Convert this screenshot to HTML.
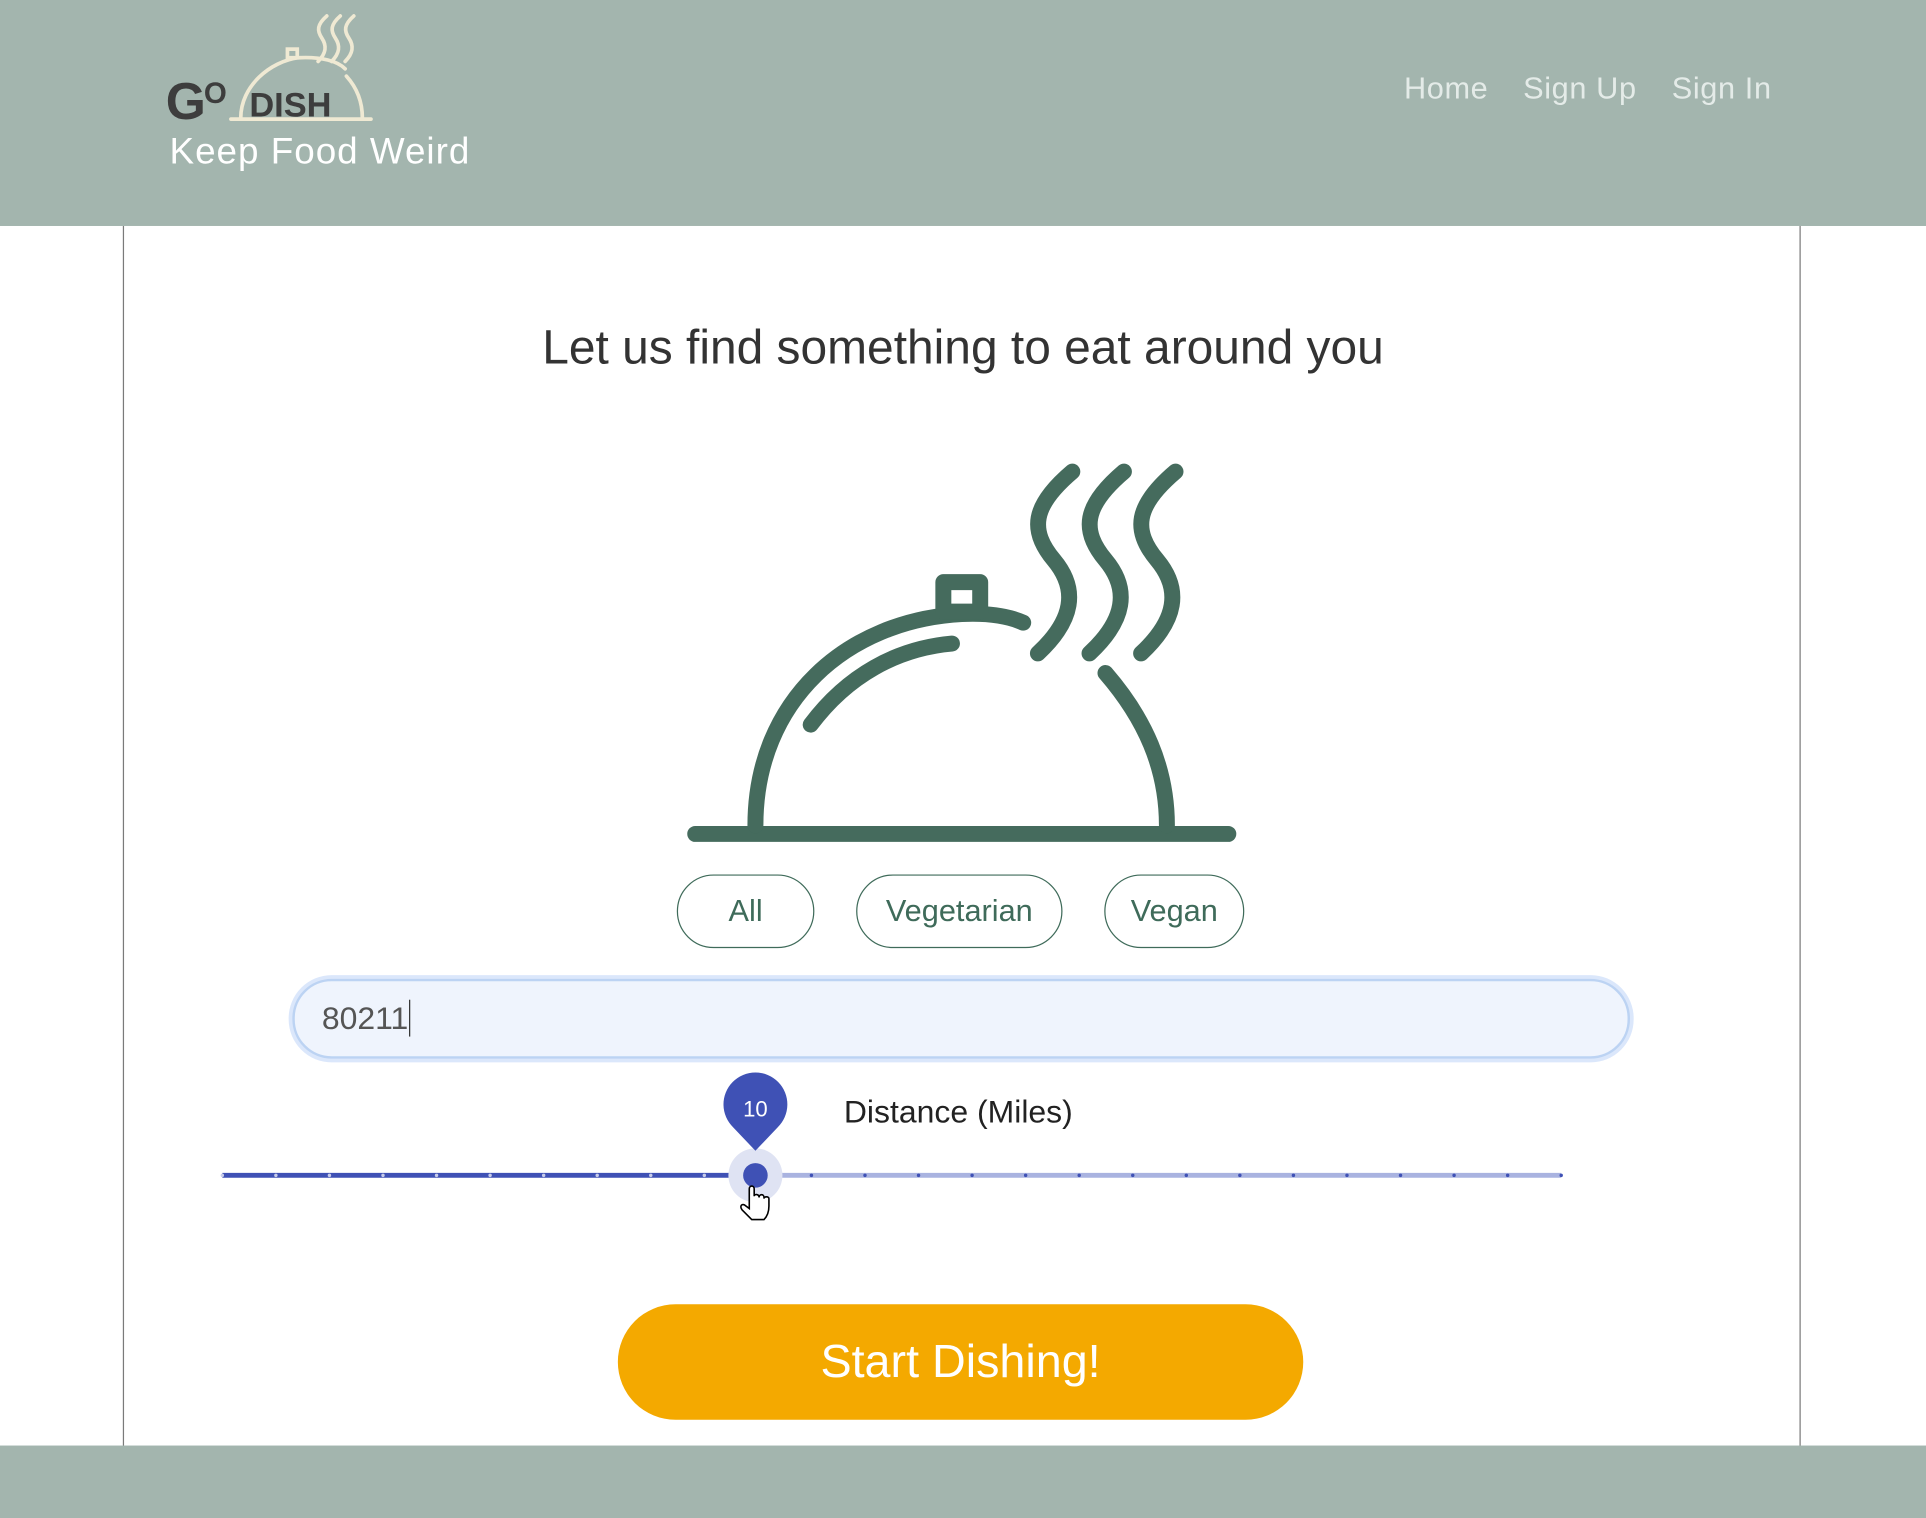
<!DOCTYPE html>
<html><head><meta charset="utf-8">
<style>
html,body{margin:0;padding:0;width:1926px;height:1518px;overflow:hidden;background:#fff;font-family:"Liberation Sans",sans-serif;}
#w{position:absolute;left:0;top:0;width:1568px;height:1236px;transform:scale(1.22832,1.22816);transform-origin:0 0;}
.hdr{position:absolute;left:0;top:0;width:1568px;height:184px;background:#a3b5ae;}
.ftr{position:absolute;left:0;top:1177px;width:1568px;height:59px;background:#a3b5ae;}
.card{position:absolute;left:100px;top:184px;width:1364px;height:1000px;border:1px solid #7a7a7a;border-top:none;background:#fff;}
.nav{position:absolute;top:58px;font-size:25px;color:#e4ebe8;letter-spacing:0.5px;}
.tag{position:absolute;left:138px;top:107px;font-size:30px;color:#fff;letter-spacing:0.8px;}
.title{position:absolute;left:0;width:1568px;top:262px;text-align:center;font-size:39px;color:#333;}
.pill{position:absolute;top:712px;height:58px;border:1.5px solid #3f6b5a;border-radius:30px;color:#3f6b5a;font-size:25px;text-align:center;line-height:58px;box-sizing:content-box;}
.inp{position:absolute;left:238px;top:797px;width:1085px;height:61px;background:#eff4fd;border:2px solid #bcd3f3;border-radius:32px;box-shadow:0 0 0 3px #dbe7fb;}
.inp span{position:absolute;left:22px;top:15px;font-size:26px;color:#555;}
.dist{position:absolute;left:687px;top:890px;font-size:26px;color:#222;}
.btn{position:absolute;left:503px;top:1062px;width:558px;height:94px;border-radius:47px;background:#f4a900;color:#fff;font-size:38px;text-align:center;line-height:94px;}
</style></head><body>
<div id="w">
<div class="hdr"></div>
<div class="card"></div>
<div class="ftr"></div>

<svg style="position:absolute;left:0;top:0" width="400" height="184" viewBox="0 0 400 184">
 <g fill="none" stroke="#efe9d3" stroke-width="3" stroke-linecap="round">
  <path d="M196,96 C196,70 220,50 243,47 C262,46 275,50 281,56"/>
  <path d="M282,62 C291,72 295,84 295,96"/>
  <rect x="234" y="40" width="8" height="7"/>
  <path d="M188,97 L302,97"/>
  <path d="M266,13 C258,20 258,25 262,31 C266,37 266,43 259,50"/>
  <path d="M277,13 C269,20 269,25 273,31 C277,37 277,43 270,50"/>
  <path d="M288,13 C280,20 280,25 284,31 C288,37 288,43 281,50"/>
 </g>
 <text x="135" y="97" font-family="Liberation Sans,sans-serif" font-size="42" fill="#3d3d3d" font-weight="bold">G</text>
 <text x="166" y="84" font-family="Liberation Sans,sans-serif" font-size="24" fill="#3d3d3d" font-weight="bold">O</text>
 <text x="203" y="95" font-family="Liberation Sans,sans-serif" font-size="28" fill="#3d3d3d" font-weight="bold">DISH</text>
</svg>
<div class="tag">Keep Food Weird</div>
<div class="nav" style="left:1143px">Home</div>
<div class="nav" style="left:1240px">Sign Up</div>
<div class="nav" style="left:1361px">Sign In</div>

<div class="title">Let us find something to eat around you</div>

<svg style="position:absolute;left:0;top:0" width="1568" height="1236" viewBox="0 0 1568 1236">
 <g fill="none" stroke="#456b5d" stroke-width="13" stroke-linecap="round" stroke-linejoin="round">
  <path d="M566,679 L1000,679"/>
  <path d="M615,672 C615,570 690,505 783,500 C805,499 822,502 833,507"/>
  <path d="M900,548 C932,585 950,625 950,672"/>
  <path d="M660,590 C690,550 730,528 775,524"/>
  <rect x="768" y="474" width="30" height="24"/>
  <path d="M873,384 C840,412 838,432 858,456 C878,480 874,505 845,532"/>
  <path d="M915,384 C882,412 880,432 900,456 C920,480 916,505 887,532"/>
  <path d="M957,384 C924,412 922,432 942,456 C962,480 958,505 929,532"/>
 </g>
 <line x1="181" y1="957" x2="615" y2="957" stroke="#3f51b5" stroke-width="4"/>
 <line x1="615" y1="957" x2="1271" y2="957" stroke="#a9b3e0" stroke-width="4"/>
 <g id="dots"></g>
 <circle cx="615" cy="957" r="22" fill="#dfe3f3"/>
 <circle cx="615" cy="957" r="10" fill="#3f51b5"/>
 <path d="M615,937 L597,918 A26,26 0 1 1 633,918 Z" fill="#3f51b5"/>
 <text x="615" y="909" text-anchor="middle" font-family="Liberation Sans,sans-serif" font-size="18" fill="#fff">10</text>
 <path d="M610,968 L610,984 L606,981 C603,980 602,983 605,986 L612,993 L622,993 C625,990 626,986 626,982 L626,976 C626,974 622,974 622,976 L622,975 C622,972 618,972 618,975 C618,972 614,972 614,974 L614,968 C614,965 610,965 610,968 Z" fill="#fff" stroke="#000" stroke-width="1.3"/>
</svg>

<div class="pill" style="left:551px;width:110px">All</div>
<div class="pill" style="left:697px;width:166px">Vegetarian</div>
<div class="pill" style="left:899px;width:112px">Vegan</div>

<div class="inp"><span>80211<span style="position:static;border-left:1.5px solid #333;margin-left:1px"></span></span></div>

<div class="dist">Distance (Miles)</div>
<div class="btn">Start Dishing!</div>
</div>
<script>
var g=document.getElementById('dots'),s='';
for(var i=0;i<=25;i++){var x=181+i*43.6;if(Math.abs(x-615)<5)continue;
s+='<circle cx="'+x+'" cy="957" r="1.4" fill="'+(x<615?'#c8cdea':'#3f51b5')+'"/>';}
g.innerHTML=s;
</script>
</body></html>
